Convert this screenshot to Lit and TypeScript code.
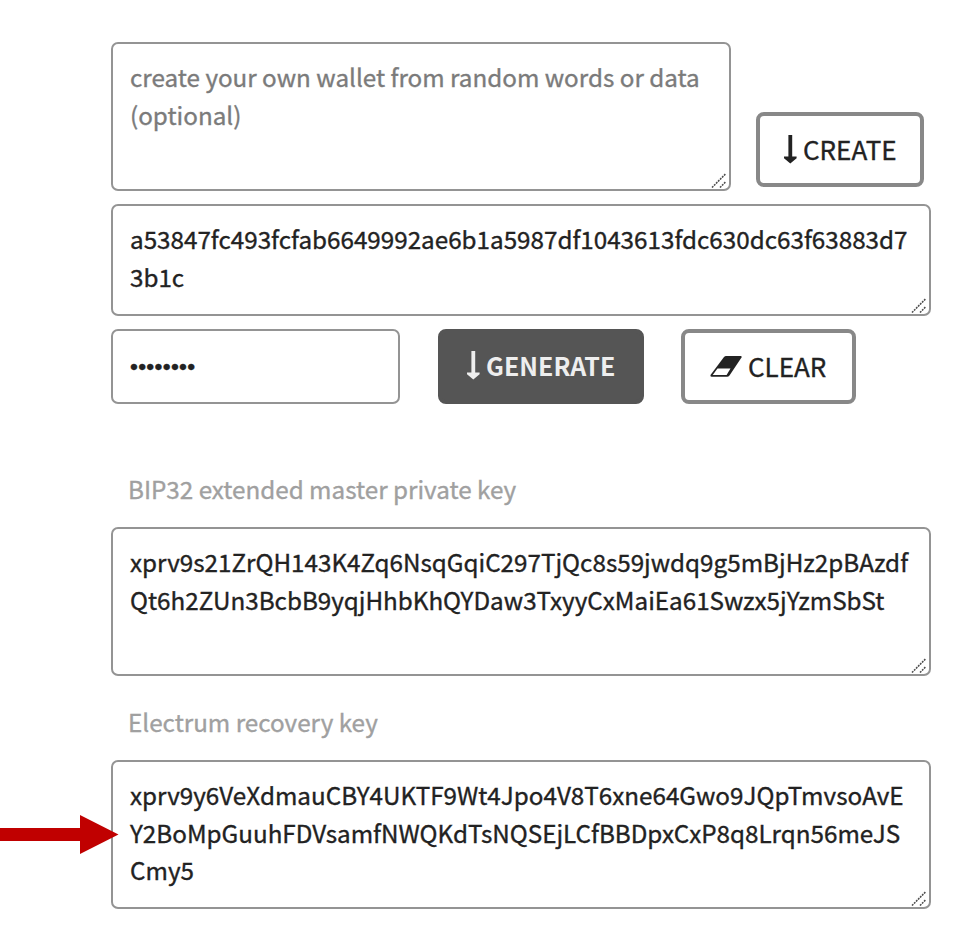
import { LitElement, html, css, svg } from "lit";
import { customElement, property } from "lit/decorators.js";

const grip = html`<svg class="grip" width="17" height="17" viewBox="0 0 17 17">
  <path d="M1 15.5L15 1.500M9 15.5L15 9.5" fill="none" stroke="#444" stroke-width="1.5" stroke-dasharray="1.900 .93" />
</svg>`;

@customElement("text-box")
class TextBox extends LitElement {
  @property({ type: Array }) lines: string[] = [];
  static styles = css`
    :host {
      display: block;
      position: relative;
      box-sizing: border-box;
      border: 2px solid #949494;
      border-radius: 7px;
      padding: 14px 17px;
      background: #fff;
    }
    .line { white-space: pre; height: 37.5px; line-height: 37.5px; }
    .grip { position: absolute; right: 1px; bottom: 0; display: block; }
  `;
  render() {
    return html`${this.lines.map((l) => html`<div class="line">${l}</div>`)}${grip}`;
  }
}

const downArrow = svg`<path d="M4.400 0h3.800v21.500h4.400v1.800L6.300 28.500 0 23.300v-1.800h4.400z" fill="currentColor"/>`;

@customElement("app-root")
class AppRoot extends LitElement {
  static styles = css`
    :host {
      display: block;
      position: relative;
      box-sizing: border-box;
      width: 979px;
      height: 943px;
      padding: 42px 48px 0 111px;
      overflow: hidden;
      background: #fff;
      color: #222;
      font-family: "Noto Sans CJK SC", "Open Sans", sans-serif;
      font-size: 24.22px;
      line-height: 37.5px;
      -webkit-text-stroke: 0.35px currentColor;
    }
    .row { display: flex; align-items: flex-end; }
    .create-row { height: 149px; }
    .seed { width: 620px; height: 149px; color: #7b7b7b; }
    .hex { height: 112px; margin-top: 13px; }
    .actions { margin-top: 13px; height: 75px; }
    .tall { height: 149px; }
    .btn {
      display: flex;
      align-items: center;
      box-sizing: border-box;
      height: 75px;
      padding-bottom: 2px;
      border: 4px solid #888;
      border-radius: 8px;
      white-space: nowrap;
      font-size: 26px;
    }
    .btn svg { display: block; flex: none; }
    .create { width: 168px; margin: 0 0 4px 25px; padding-left: 24px; }
    .create svg { margin: 1px 6px 0 0; }
    .password {
      box-sizing: border-box;
      width: 289px;
      height: 75px;
      border: 2px solid #949494;
      border-radius: 7px;
      padding-left: 17px;
      font-family: "Liberation Sans", sans-serif;
      font-size: 22.5px;
      letter-spacing: 0.3px;
      line-height: 72px;
    }
    .generate {
      width: 206px;
      margin-left: 38px;
      padding-left: 25px;
      border-color: #555;
      background: #555;
      color: #eee;
      font-weight: 700;
      font-size: 25px;
      -webkit-text-stroke: 0;
    }
    .generate svg { margin: -1px 6px 0 0; }
    .clear { width: 175px; margin-left: 37px; padding-left: 25px; }
    .clear svg { margin: 1px 6px 0 0; }
    .label { padding-left: 17px; color: #a0a0a0; height: 37px; }
    .first { margin-top: 66px; margin-bottom: 20px; }
    .second { margin-top: 27px; margin-bottom: 20px; }
    .pointer { position: absolute; left: 0; top: 815px; display: block; }
  `;
  render() {
    return html`
      <div class="row create-row">
        <text-box class="seed" .lines=${["create your own wallet from random words or data", "(optional)"]}></text-box>
        <div class="btn create">
          <svg width="13" height="29" viewBox="0 0 13 29">${downArrow}</svg><span>CREATE</span>
        </div>
      </div>
      <text-box class="hex" .lines=${["a53847fc493fcfab6649992ae6b1a5987df1043613fdc630dc63f63883d7", "3b1c"]}></text-box>
      <div class="row actions">
        <div class="password">••••••••</div>
        <div class="btn generate">
          <svg width="13" height="29" viewBox="0 0 13 29">${downArrow}</svg><span>GENERATE</span>
        </div>
        <div class="btn clear">
          <svg width="32" height="21" viewBox="0 0 32 21">
            <path d="M16 0H31Q32 0 31.500 1.500L19.500 19.500Q18.500 20.800 17 20.800H1.500Q0 20.800 .5 19L14 1Q15 0 16 0z" fill="#222" />
            <path d="M7.500 12.500H20.500L16.600 18.900H2.700z" fill="#fff" />
          </svg><span>CLEAR</span>
        </div>
      </div>
      <div class="label first">BIP32 extended master private key</div>
      <text-box class="tall" .lines=${["xprv9s21ZrQH143K4Zq6NsqGqiC297TjQc8s59jwdq9g5mBjHz2pBAzdf", "Qt6h2ZUn3BcbB9yqjHhbKhQYDaw3TxyyCxMaiEa61Swzx5jYzmSbSt"]}></text-box>
      <div class="label second">Electrum recovery key</div>
      <text-box class="tall" .lines=${["xprv9y6VeXdmauCBY4UKTF9Wt4Jpo4V8T6xne64Gwo9JQpTmvsoAvE", "Y2BoMpGuuhFDVsamfNWQKdTsNQSEjLCfBBDpxCxP8q8Lrqn56meJS", "Cmy5"]}></text-box>
      <svg class="pointer" width="119" height="39" viewBox="0 0 119 39">
        <path d="M0 13H80V0L118.500 19.500L80 39V26H0z" fill="#c00000" />
      </svg>
    `;
  }
}
